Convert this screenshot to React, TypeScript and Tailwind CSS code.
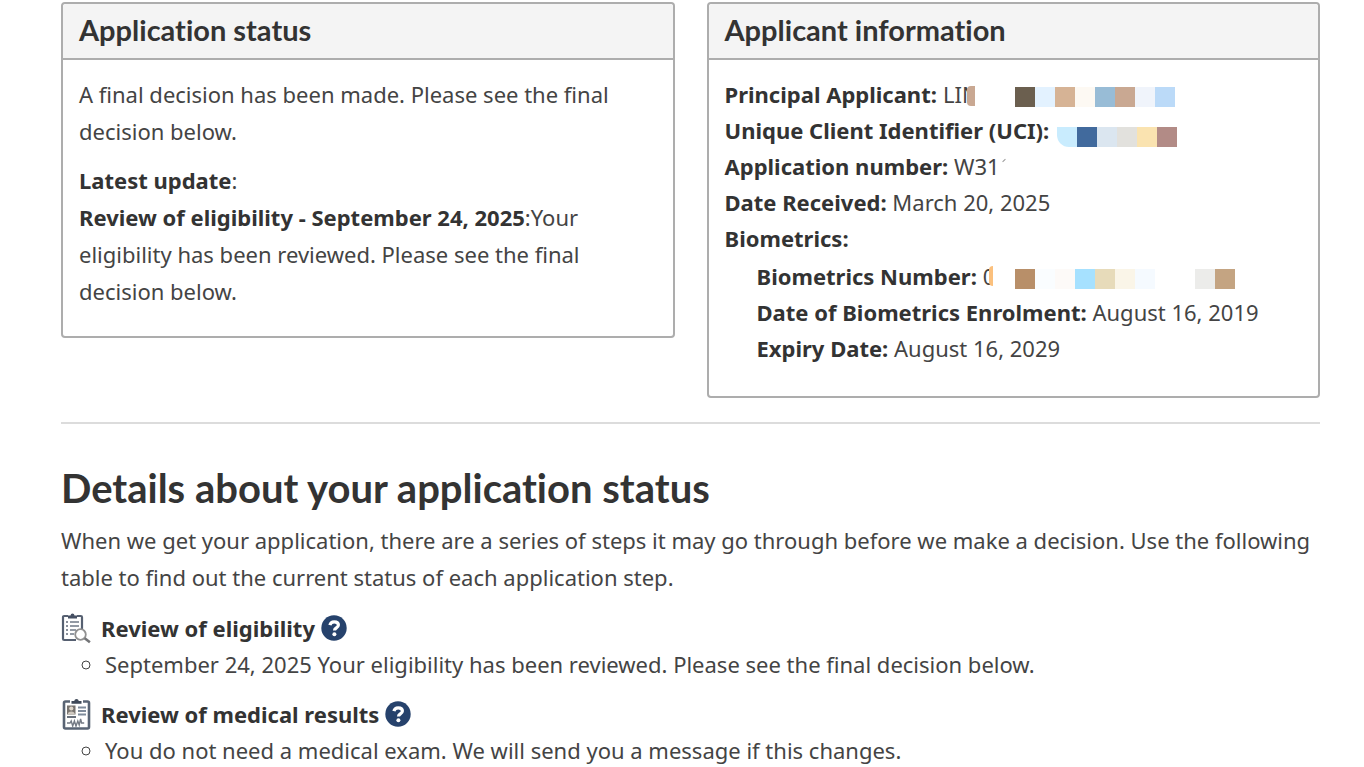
import type { ReactNode } from 'react';

const Panel = ({ title, children }: { title: string; children: ReactNode }) => (
  <section className="rounded border-2 border-[#adadad] bg-white">
    <header className="rounded-t-sm border-b-2 border-[#adadad] bg-[#f4f4f4] px-4 pt-[7px] pb-[9px]">
      <h2 className="font-['Lato',sans-serif] text-[29px] leading-[38px] font-bold text-[#333] [font-variant-ligatures:none]">{title}</h2>
    </header>
    <div className="px-4 pt-4 pb-6.5">{children}</div>
  </section>
);

const Strong = ({ children }: { children: ReactNode }) => <strong className="text-[#333]">{children}</strong>;

const Mosaic = ({ children }: { children: ReactNode }) => (
  <span className="mt-1.5 flex h-5" aria-hidden="true">
    {children}
  </span>
);

const HelpButton = ({ label }: { label: string }) => (
  <button type="button" aria-label={label} className="shrink-0">
    <svg viewBox="0 0 26 26" className="size-[26px]">
      <circle cx="13" cy="13" r="12.7" fill="#26426c" />
      <path d="M8.9 10.2C9.4 7.8 11 6.8 13.2 6.8c2.4 0 4.2 1.2 4.2 3.3 0 2.9-3.9 2.7-3.9 5.3" fill="none" stroke="#fff" strokeWidth="3.2" />
      <circle cx="13.4" cy="19.2" r="2" fill="#fff" />
    </svg>
  </button>
);

const EligibilityIcon = () => (
  <svg viewBox="0 0 30 32" className="h-8 w-[30px] shrink-0" fill="none">
    <path d="M7 4H3.2Q2 4 2 5.2V26.8Q2 28 3.2 28H15M16 4h3.8Q21 4 21 5.2V17" stroke="#566071" strokeWidth="2.2" />
    <path d="M7 6.5V3.5h2.5Q9.7 1.5 11.5 1.5t2 2H16v3z" fill="#465063" />
    <path d="M5 10h2M5 14h2M5 18h2M5 22h2" stroke="#8a909b" strokeWidth="2" />
    <path d="M9 10h9M9 14h9M9 18h6M9 22h4" stroke="#939aa4" strokeWidth="2" />
    <circle cx="19.5" cy="22.5" r="5.3" fill="#fff" stroke="#919191" strokeWidth="1.8" />
    <path d="m23.7 26.3 5.2 4" stroke="#737477" strokeWidth="2.6" />
  </svg>
);

const MedicalIcon = () => (
  <svg viewBox="0 0 30 32" className="h-8 w-[30px] shrink-0" fill="none">
    <rect x="3" y="3.5" width="25" height="27" rx="1.5" fill="#fff" stroke="#596474" strokeWidth="2.6" />
    <path d="M9 2h13v4H9z" fill="#fff" />
    <path d="M10.5 5.8V3h2.7Q13.6 1 15.5 1t2.3 2h2.7v2.8z" fill="#3f4958" />
    <rect x="6" y="7.5" width="8.5" height="9" fill="#77736f" />
    <circle cx="10.3" cy="10.5" r="2.1" fill="#e0d8cc" />
    <path d="M6.8 16.3Q7 13.6 10.3 13.6t3.5 2.7z" fill="#d0c9c0" />
    <path d="M17 9.5h8M17 13h8M17 16.5h8" stroke="#7f8b9b" strokeWidth="2" />
    <path d="M6 19h9" stroke="#59606c" strokeWidth="1.8" />
    <path d="M6 25h3l1.2-2 1.5 5 1.7-5 1.6 5 1.8-5 1.4 4 1.4-6 1 4h2.6" stroke="#747a84" strokeWidth="1.4" />
  </svg>
);

const Step = ({ icon, title, children }: { icon: ReactNode; title: string; children: ReactNode }) => (
  <section>
    <div className="flex items-center">
      {icon}
      <h3 className="mr-1.5 ml-2.5 font-bold text-[#333]">{title}</h3>
      <HelpButton label={`Help: ${title}`} />
    </div>
    <ul className="list-[circle] pl-11">
      <li>{children}</li>
    </ul>
  </section>
);

export default function App() {
  return (
    <main className="bg-white pt-0.5 pr-11 pl-[61px] font-['Noto_Sans',sans-serif] text-[22px] leading-9 text-[#444]">
      <div className="grid grid-cols-2 items-start gap-8">
        <Panel title="Application status">
          <div className="leading-[37px]">
            <p>A final decision has been made. Please see the final decision below.</p>
            <p className="mt-3">
              <Strong>Latest update</Strong>:<br />
              <Strong>Review of eligibility - September 24, 2025</Strong>:Your eligibility has been reviewed. Please see the final decision below.
            </p>
          </div>
        </Panel>

        <Panel title="Applicant information">
          <ul className="pb-1">
            <li className="flex items-center gap-1.5">
              <Strong>Principal Applicant:</Strong>
              <span className="relative mr-7.5">
                LIN
                <span className="absolute top-2.5 right-0 h-5 w-1 bg-white" />
                <span className="absolute top-2.5 right-1 h-5 w-2 rounded-l bg-[#c9a892]" />
              </span>
              <Mosaic>
                <span className="w-5 bg-[#6b5f4f]" />
                <span className="w-5 bg-[#e3f2ff]" />
                <span className="w-5 bg-[#d6b395]" />
                <span className="w-5 bg-[#fdf9f3]" />
                <span className="w-5 bg-[#98bcd6]" />
                <span className="w-5 bg-[#c9a892]" />
                <span className="w-5 bg-[#f0f4fb]" />
                <span className="w-5 bg-[#bbdaf8]" />
              </Mosaic>
            </li>
            <li className="flex items-center gap-2">
              <Strong>Unique Client Identifier (UCI):</Strong>
              <span className="pt-2">
                <Mosaic>
                  <span className="w-5 rounded-bl-xl bg-[#c9ecfe]" />
                  <span className="w-5 bg-[#416a9d]" />
                  <span className="w-5 bg-[#dbe6f0]" />
                  <span className="w-5 bg-[#e2e1dd]" />
                  <span className="w-5 bg-[#fae3b0]" />
                  <span className="w-5 bg-[#b28b86]" />
                </Mosaic>
              </span>
            </li>
            <li>
              <Strong>Application number:</Strong> W31
              <span className="ml-0.5 inline-block h-px w-1 -translate-y-3.5 -rotate-45 bg-[#999]" />
            </li>
            <li>
              <Strong>Date Received:</Strong> March 20, 2025
            </li>
            <li>
              <Strong>Biometrics:</Strong>
              <ul className="mt-0.5 pl-8">
                <li className="flex items-center gap-1.5">
                  <Strong>Biometrics Number:</Strong>
                  <span className="relative mr-3.5">
                    0
                    <span className="absolute top-2 right-0 h-5 w-1 bg-white" />
                    <span className="absolute top-2 right-0.5 h-5 w-1 rounded-l bg-[#fbc07d]" />
                  </span>
                  <Mosaic>
                    <span className="w-5 bg-[#b88f69]" />
                    <span className="w-5 bg-[#fafdff]" />
                    <span className="w-5 bg-[#fdfaf8]" />
                    <span className="w-5 bg-[#a6e1ff]" />
                    <span className="w-5 bg-[#e7dbba]" />
                    <span className="w-5 bg-[#faf5e8]" />
                    <span className="w-5 bg-[#f5faff]" />
                    <span className="w-10" />
                    <span className="w-5 bg-[#ececea]" />
                    <span className="w-5 bg-[#c4a482]" />
                  </Mosaic>
                </li>
                <li>
                  <Strong>Date of Biometrics Enrolment:</Strong> August 16, 2019
                </li>
                <li>
                  <Strong>Expiry Date:</Strong> August 16, 2029
                </li>
              </ul>
            </li>
          </ul>
        </Panel>
      </div>

      <hr className="mt-6 border-t-2 border-[#dcdcdc]" />

      <h1 className="mt-[38px] font-['Lato',sans-serif] text-[40px] leading-[52px] font-bold text-[#333] [font-variant-ligatures:none]">
        Details about your application status
      </h1>
      <p className="mt-2 leading-[37px]">
        When we get your application, there are a series of steps it may go through before we make a decision. Use the following table to find out the current status of each application step.
      </p>
      <div className="mt-3.5 space-y-3.5">
        <Step icon={<EligibilityIcon />} title="Review of eligibility">
          September 24, 2025 Your eligibility has been reviewed. Please see the final decision below.
        </Step>
        <Step icon={<MedicalIcon />} title="Review of medical results">
          You do not need a medical exam. We will send you a message if this changes.
        </Step>
      </div>
    </main>
  );
}
